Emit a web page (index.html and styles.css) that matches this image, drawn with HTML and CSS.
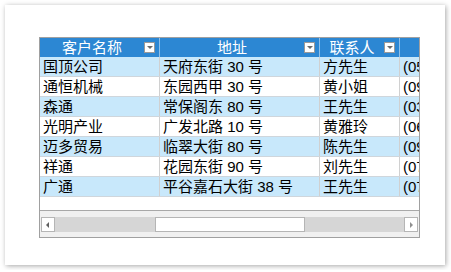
FILE: index.html
```html
<!DOCTYPE html>
<html lang="zh">
<head>
<meta charset="utf-8">
<link rel="stylesheet" href="styles.css">
</head>
<body>
<div class="card">
  <div class="grid">
    <div class="viewport">
      <div class="row head">
        <div class="cell c1"><span class="title">客户名称</span><span class="fbtn"></span></div>
        <div class="cell c2"><span class="title">地址</span><span class="fbtn"></span></div>
        <div class="cell c3"><span class="title">联系人</span><span class="fbtn"></span></div>
        <div class="cell c4"></div>
      </div>
      <div class="row alt"><div class="cell c1">国顶公司</div><div class="cell c2">天府东街 30 号</div><div class="cell c3">方先生</div><div class="cell c4">(05) 5554729</div></div>
      <div class="row"><div class="cell c1">通恒机械</div><div class="cell c2">东园西甲 30 号</div><div class="cell c3">黄小姐</div><div class="cell c4">(09) 5553932</div></div>
      <div class="row alt"><div class="cell c1">森通</div><div class="cell c2">常保阁东 80 号</div><div class="cell c3">王先生</div><div class="cell c4">(03) 5557788</div></div>
      <div class="row"><div class="cell c1">光明产业</div><div class="cell c2">广发北路 10 号</div><div class="cell c3">黄雅玲</div><div class="cell c4">(06) 5554321</div></div>
      <div class="row alt"><div class="cell c1">迈多贸易</div><div class="cell c2">临翠大街 80 号</div><div class="cell c3">陈先生</div><div class="cell c4">(09) 5551212</div></div>
      <div class="row"><div class="cell c1">祥通</div><div class="cell c2">花园东街 90 号</div><div class="cell c3">刘先生</div><div class="cell c4">(07) 5556778</div></div>
      <div class="row alt"><div class="cell c1">广通</div><div class="cell c2">平谷嘉石大街 38 号</div><div class="cell c3">王先生</div><div class="cell c4">(07) 5559482</div></div>
    </div>
    <div class="hscroll">
      <div class="track">
        <span class="sbtn left"></span>
        <span class="thumb"></span>
        <span class="spacer"></span>
        <span class="sbtn right"></span>
      </div>
    </div>
  </div>
</div>
</body>
</html>
```
FILE: styles.css
```css
html, body {
  margin: 0;
  padding: 0;
  background: #ffffff;
}
body {
  font-family: "Liberation Sans", "Noto Sans CJK SC", sans-serif;
  font-size: 15px;
  color: #000;
}
.card {
  margin: 5px;
  width: 440px;
  height: 260px;
  box-sizing: border-box;
  padding: 32px 0 0 34px;
  background: #fff;
  box-shadow: 1px 1px 5px rgba(0,0,0,0.35);
}
.grid {
  width: 381px;
  height: 201px;
  box-sizing: border-box;
  border: 1px solid #a0a0a0;
  display: flex;
  flex-direction: column;
  overflow: hidden;
}
.viewport {
  height: 172px;
  overflow: hidden;
  background: #fff;
}
.row {
  display: flex;
  height: 20px;
  box-sizing: border-box;
  border-bottom: 1px solid #cfd6dc;
  white-space: nowrap;
}
.row.alt { background: #c8e8fb; }
.row.head {
  height: 19px;
  background: #2c87d3;
  color: #fff;
  border-bottom: none;
}
.cell {
  box-sizing: border-box;
  border-right: 1px solid #d0d0d0;
  padding-left: 3px;
  line-height: 19px;
  overflow: hidden;
  flex-shrink: 0;
}
.c1 { width: 120px; }
.c2 { width: 160px; }
.c3 { width: 80px; }
.c4 { width: 100px; border-right: none; }
.head .cell {
  border-right: 1px solid #8fc0ea;
  display: flex;
  align-items: center;
  padding-left: 0;
}
.head .c4 { border-right: none; }
.title {
  flex: 1;
  text-align: center;
}
.fbtn {
  width: 11px;
  height: 11px;
  box-sizing: border-box;
  margin-right: 4px;
  background: #fff;
  border: 1px solid #9a9a9a;
  position: relative;
}
.fbtn::after {
  content: "";
  position: absolute;
  left: 2px;
  top: 3px;
  border-left: 3px solid transparent;
  border-right: 3px solid transparent;
  border-top: 3px solid #6a6a6a;
}
.hscroll {
  flex: 1;
  border-top: 1px solid #a8a8a8;
  background: #f0f0f0;
  padding: 6px 1px 5px 1px;
}
.track {
  display: flex;
  height: 15px;
  background: #d6d6d6;
}
.sbtn {
  width: 14px;
  height: 15px;
  box-sizing: border-box;
  background: #fff;
  border: 1px solid #b5b5b5;
  position: relative;
}
.sbtn.left::after, .sbtn.right::after {
  content: "";
  position: absolute;
  top: 4px;
  border-top: 3px solid transparent;
  border-bottom: 3px solid transparent;
}
.sbtn.left::after {
  left: 4px;
  border-right: 3px solid #606060;
}
.sbtn.right::after {
  left: 5px;
  border-left: 3px solid #909090;
}
.thumb {
  margin-left: 100px;
  width: 150px;
  height: 15px;
  box-sizing: border-box;
  background: #fff;
  border: 1px solid #b5b5b5;
}
.spacer { flex: 1; }
```
